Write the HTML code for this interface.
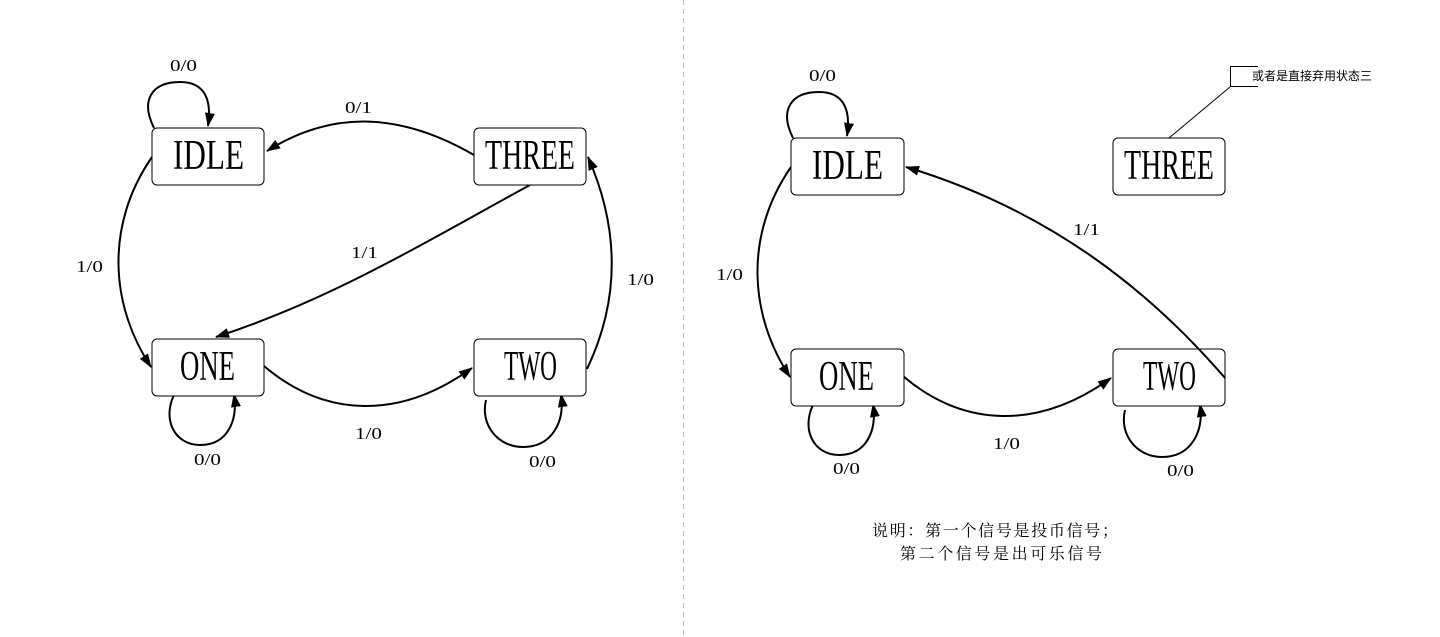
<!DOCTYPE html>
<html><head><meta charset="utf-8"><style>
html,body{margin:0;padding:0;background:#fff;width:1440px;height:637px;overflow:hidden}
svg{display:block}
.b{fill:#fff;stroke:#000;stroke-width:1}
.e{fill:none;stroke:#000;stroke-width:2}
.n{font-family:"Liberation Serif",serif;font-size:42px;fill:#000}
.l{font-family:"Liberation Serif",serif;font-size:17px;fill:#000}
</style></head><body>
<svg width="1440" height="637" viewBox="0 0 1440 637">
<defs>
<marker id="a" viewBox="0 0 14 10" refX="13" refY="5" markerWidth="14" markerHeight="10" markerUnits="userSpaceOnUse" orient="auto"><path d="M0,0 L14,5 L0,10 z" fill="#000"/></marker>
</defs>
<line x1="683.5" y1="0" x2="683.5" y2="637" stroke="#bbb" stroke-dasharray="5,4"/>

<!-- LEFT -->
<g>
<path class="e" marker-end="url(#a)" d="M154,128 C140,100 152,82 180,82 C205,82 212,100 208,126"/>
<path class="e" marker-end="url(#a)" d="M474,155 C410,118 340,105 267,151"/>
<path class="e" marker-end="url(#a)" d="M530,185 C420,245 330,300 216,337"/>
<path class="e" marker-end="url(#a)" d="M152,157 C105,225 110,305 151,367"/>
<path class="e" marker-end="url(#a)" d="M264,366 C325,418 400,420 472,368"/>
<path class="e" marker-end="url(#a)" d="M587,369 C620,300 620,230 588,157"/>
<path class="e" marker-end="url(#a)" d="M174,395 C162,420 175,445 200,445 C228,445 238,420 234,394"/>
<path class="e" marker-end="url(#a)" d="M486,400 C480,425 498,447 523,447 C552,447 565,422 561,394"/>
<rect class="b" x="152" y="128" width="112" height="57" rx="5"/>
<rect class="b" x="474" y="128" width="112" height="57" rx="5"/>
<rect class="b" x="152" y="339" width="112" height="57" rx="5"/>
<rect class="b" x="474" y="339" width="112" height="57" rx="5"/>
<text class="n" x="173" y="169" textLength="71" lengthAdjust="spacingAndGlyphs">IDLE</text>
<text class="n" x="485" y="169" textLength="90" lengthAdjust="spacingAndGlyphs">THREE</text>
<text class="n" x="180" y="380" textLength="55" lengthAdjust="spacingAndGlyphs">ONE</text>
<text class="n" x="504" y="380" textLength="53" lengthAdjust="spacingAndGlyphs">TWO</text>
<text class="l" x="170" y="71" textLength="27" lengthAdjust="spacingAndGlyphs">0/0</text>
<text class="l" x="345" y="113" textLength="27" lengthAdjust="spacingAndGlyphs">0/1</text>
<text class="l" x="351" y="258" textLength="27" lengthAdjust="spacingAndGlyphs">1/1</text>
<text class="l" x="76" y="272" textLength="27" lengthAdjust="spacingAndGlyphs">1/0</text>
<text class="l" x="627" y="285" textLength="27" lengthAdjust="spacingAndGlyphs">1/0</text>
<text class="l" x="355" y="439" textLength="27" lengthAdjust="spacingAndGlyphs">1/0</text>
<text class="l" x="194" y="465" textLength="27" lengthAdjust="spacingAndGlyphs">0/0</text>
<text class="l" x="529" y="467" textLength="27" lengthAdjust="spacingAndGlyphs">0/0</text>
</g>

<!-- RIGHT -->
<g transform="translate(639,10)">
<path class="e" marker-end="url(#a)" d="M154,128 C140,100 152,82 180,82 C205,82 212,100 208,126"/>
<path class="e" marker-end="url(#a)" d="M152,157 C105,225 110,305 151,367"/>
<path class="e" marker-end="url(#a)" d="M264,366 C325,418 400,420 472,368"/>
<path class="e" marker-end="url(#a)" d="M174,395 C162,420 175,445 200,445 C228,445 238,420 234,394"/>
<path class="e" marker-end="url(#a)" d="M486,400 C480,425 498,447 523,447 C552,447 565,422 561,394"/>
<rect class="b" x="152" y="128" width="113" height="57" rx="5"/>
<rect class="b" x="474" y="128" width="112" height="57" rx="5"/>
<rect class="b" x="152" y="339" width="113" height="57" rx="5"/>
<rect class="b" x="474" y="339" width="112" height="57" rx="5"/>
<path class="e" marker-end="url(#a)" d="M586,368 C510,280 410,200 267,157"/>
<text class="n" x="173" y="169" textLength="71" lengthAdjust="spacingAndGlyphs">IDLE</text>
<text class="n" x="485" y="169" textLength="90" lengthAdjust="spacingAndGlyphs">THREE</text>
<text class="n" x="180" y="380" textLength="55" lengthAdjust="spacingAndGlyphs">ONE</text>
<text class="n" x="504" y="380" textLength="53" lengthAdjust="spacingAndGlyphs">TWO</text>
<text class="l" x="170" y="71" textLength="27" lengthAdjust="spacingAndGlyphs">0/0</text>
<text class="l" x="434" y="225" textLength="27" lengthAdjust="spacingAndGlyphs">1/1</text>
<text class="l" x="77" y="270" textLength="27" lengthAdjust="spacingAndGlyphs">1/0</text>
<text class="l" x="354" y="439" textLength="27" lengthAdjust="spacingAndGlyphs">1/0</text>
<text class="l" x="194" y="464" textLength="27" lengthAdjust="spacingAndGlyphs">0/0</text>
<text class="l" x="528" y="466" textLength="27" lengthAdjust="spacingAndGlyphs">0/0</text>
</g>
<line x1="1230" y1="87" x2="1169" y2="138" stroke="#000" stroke-width="1"/>
<path d="M1258,66.5 H1230.5 V86.5 H1258" fill="none" stroke="#000" stroke-width="1"/>
<text x="1252" y="80" style="font-family:'Liberation Sans','Noto Sans CJK SC',sans-serif;font-size:12px">或者是直接弃用状态三</text>
<text x="872" y="536" textLength="246" lengthAdjust="spacing" style="font-family:'Liberation Serif','Noto Serif CJK SC',serif;font-size:16px">说明：第一个信号是投币信号；</text>
<text x="900" y="559" textLength="202" lengthAdjust="spacing" style="font-family:'Liberation Serif','Noto Serif CJK SC',serif;font-size:16px">第二个信号是出可乐信号</text>
</svg>
</body></html>
